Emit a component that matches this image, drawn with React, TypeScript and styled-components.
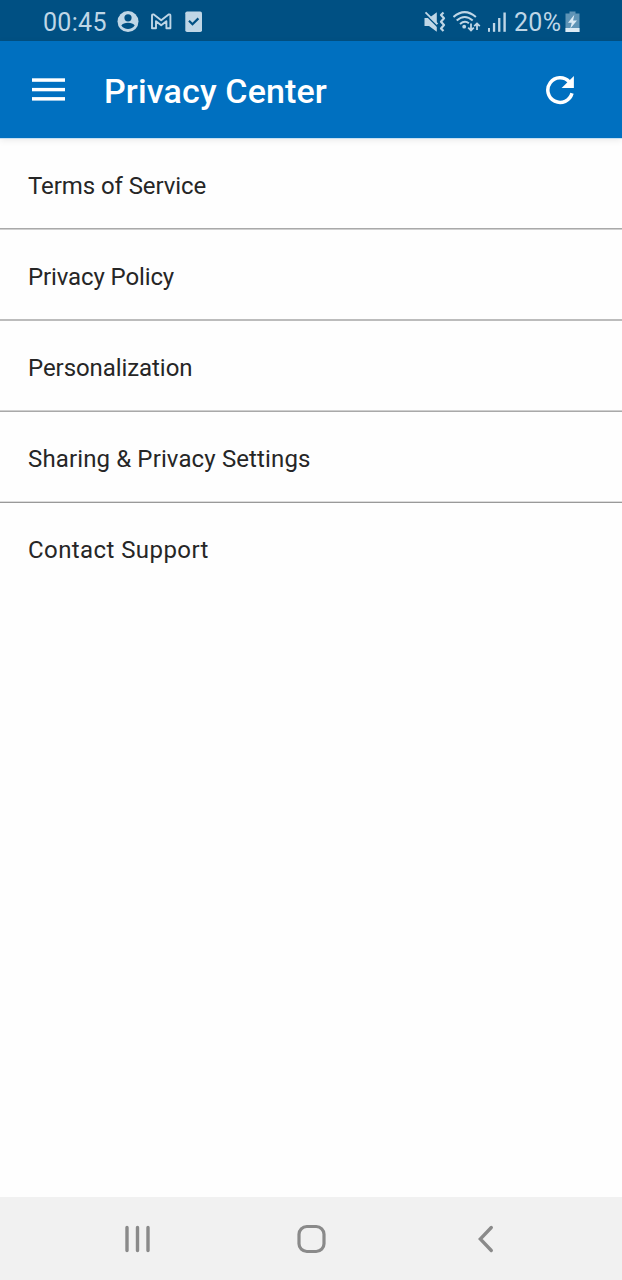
import React from "react";
import styled, { createGlobalStyle } from "styled-components";

const GlobalStyle = createGlobalStyle`
  * { box-sizing: border-box; }
  body { margin: 0; background: #fefefe; font-family: Roboto, "Liberation Sans", sans-serif; }
`;

const Screen = styled.div`
  display: flex;
  flex-direction: column;
  width: 622px;
  height: 1280px;
  background: #fefefe;
`;

const StatusBar = styled.div`
  display: flex;
  justify-content: space-between;
  height: 41px;
  padding: 0 42px 0 43px;
  background: #005083;
  color: #bfd6e6;
`;

const StatusGroup = styled.div`
  display: flex;
  align-items: center;
  height: 44px;
`;

const StatusText = styled.span<{ $width: number; $spacing?: number; $gap?: number }>`
  width: ${(p) => p.$width}px;
  margin-left: ${(p) => p.$gap ?? 0}px;
  padding-top: 2px;
  font-size: 25px;
  line-height: 42px;
  letter-spacing: ${(p) => p.$spacing ?? 0}px;
  white-space: nowrap;
`;

const StatusIcon = styled.svg<{ $gap?: number }>`
  display: block;
  flex: none;
  margin-left: ${(p) => p.$gap ?? 0}px;
`;

const AppBar = styled.header`
  display: flex;
  align-items: center;
  height: 97px;
  padding: 0 47px 0 32px;
  background: #0070c0;
  color: #fff;
  box-shadow: 0 1px 0 #c4dff2, 0 2px 7px rgba(0, 0, 0, 0.09);
`;

const IconButton = styled.button`
  display: flex;
  padding: 0;
  border: 0;
  background: none;
  color: inherit;
`;

const Title = styled.h1`
  flex: 1;
  margin: 2px 0 0 39px;
  font-size: 34px;
  font-weight: 500;
  line-height: 40px;
  letter-spacing: 0.14px;
  white-space: nowrap;
`;

const List = styled.ul`
  flex: 1;
  margin: 0;
  padding: 0;
  list-style: none;
`;

const Row = styled.li`
  display: flex;
  flex-direction: column;
  height: 91px;
  padding-top: 33px;
`;

const Label = styled.span<{ $spacing: number }>`
  height: 57px;
  padding: 0 28px;
  color: #262626;
  font-size: 24px;
  line-height: 30px;
  letter-spacing: ${(p) => p.$spacing}px;
  white-space: nowrap;
`;

const Rule = styled.div<{ $top: string; $bottom: string }>`
  flex: none;
  height: 2px;
  margin-bottom: -1px;
  border-top: 1px solid ${(p) => p.$top};
  border-bottom: 1px solid ${(p) => p.$bottom};
`;

const NavBar = styled.nav`
  display: grid;
  grid-template-columns: repeat(3, 174px);
  justify-content: center;
  justify-items: center;
  height: 83px;
  padding: 27px 0 0 1px;
  background: #f1f1f1;
  color: #8a8a8a;
`;

const NavIcon = styled.svg`
  display: block;
`;

const items = [
  { text: "Terms of Service", spacing: -0.08, rule: ["#a9a9a9", "#cfcfcf"] },
  { text: "Privacy Policy", spacing: -0.12, rule: ["#bcbcbc", "#bcbcbc"] },
  { text: "Personalization", spacing: -0.07, rule: ["#cfcfcf", "#a9a9a9"] },
  { text: "Sharing & Privacy Settings", spacing: 0.13, rule: ["#dcdcdc", "#999999"] },
  { text: "Contact Support", spacing: 0.42 },
];

export default function App() {
  return (
    <Screen>
      <GlobalStyle />
      <StatusBar>
        <StatusGroup>
          <StatusText $width={64} $spacing={0.3}>00:45</StatusText>
          <StatusIcon $gap={10} width="22" height="22" viewBox="0 0 22 22">
            <circle cx="11" cy="10.6" r="10.5" fill="currentColor" />
            <circle cx="11" cy="6.8" r="3.6" fill="#005083" />
            <path d="M4.3 14.5C5.5 12.5 8 11.7 11 11.7s5.5.8 6.7 2.8C16.2 16.8 13.8 18 11 18s-5.2-1.2-6.7-3.5z" fill="#005083" />
          </StatusIcon>
          <StatusIcon $gap={12} width="21" height="22" viewBox="0 0 21 22" fill="none" stroke="currentColor" strokeWidth="1.9" strokeLinejoin="round">
            <path d="M1 4.800Q1 3 2.800 3.400L10.200 9.300L17.600 3.400Q19.400 3 19.400 4.800V17.300H15.400V10.200L10.200 14.300L5 10.200V17.300H1z" />
          </StatusIcon>
          <StatusIcon $gap={13} width="18" height="22" viewBox="0 0 18 22">
            <rect x="0.3" y="0.5" width="16.700" height="20.500" rx="1.800" fill="currentColor" />
            <path d="M4 9.800L7.500 13.300L13.400 7.400" fill="none" stroke="#005083" strokeWidth="2.2" />
          </StatusIcon>
        </StatusGroup>
        <StatusGroup>
          <StatusIcon width="22" height="22" viewBox="0 0 22 22" fill="none" stroke="currentColor">
            <path d="M0.500 7H5L12.800 1.200V20.800L5 15H0.500z" fill="currentColor" stroke="none" />
            <path d="M0.600 2.800L13.500 15.500" stroke="#005083" strokeWidth="1.500" />
            <path d="M1.500 1.300L13.500 13.200" strokeWidth="1.900" />
            <path d="M19.500 1.500L17 4L20 7.300L17 10.700L20 14L17 17.500L19.500 20" strokeWidth="2.200" strokeLinejoin="round" />
          </StatusIcon>
          <StatusIcon $gap={7} width="28" height="22" viewBox="0 0 28 22" fill="none" stroke="currentColor" strokeWidth="2">
            <path d="M0.500 6Q11.700 -3.800 22.900 6" />
            <path d="M3.700 9.500Q11.700 2.500 19.700 9.500" />
            <path d="M7 12.900Q11.700 8.900 15.900 12.200" />
            <circle cx="11.200" cy="15.700" r="1.900" fill="currentColor" stroke="none" />
            <path d="M18 12.500V19M15.200 16.700L18 19.500L20.800 16.700M24 19V12.500M21.200 15.200L24 12.400L26.800 15.200" strokeWidth="1.800" />
          </StatusIcon>
          <StatusIcon $gap={7} width="19" height="22" viewBox="0 0 19 22" fill="currentColor">
            <rect x="0" y="17" width="2" height="3.800" />
            <rect x="4.900" y="12" width="2.300" height="8.800" />
            <rect x="10.100" y="7" width="2.300" height="13.800" />
            <rect x="15.400" y="1.500" width="2.400" height="19.300" />
          </StatusIcon>
          <StatusText $gap={7} $width={51} $spacing={0.3}>20%</StatusText>
          <StatusIcon width="15" height="22" viewBox="0 0 15 22">
            <path d="M4.500 0.500H10.500V2.500H14.500V21H0.500V2.500H4.500z" fill="#5f94b6" />
            <rect x="0.500" y="17" width="14" height="4" fill="#dcebf5" />
            <path d="M9.300 3.800L3 11.800H6.700L5.300 17.500L12 9.500H8.100z" fill="#dcebf5" />
          </StatusIcon>
        </StatusGroup>
      </StatusBar>
      <AppBar>
        <IconButton aria-label="Menu">
          <svg width="33" height="24" viewBox="0 0 33 24" fill="currentColor">
            <rect y="0.300" width="33" height="3.500" />
            <rect y="9.900" width="33" height="3.400" />
            <rect y="19.100" width="33" height="3.500" />
          </svg>
        </IconButton>
        <Title>Privacy Center</Title>
        <IconButton aria-label="Refresh">
          <svg width="30" height="30" viewBox="0 0 30 30">
            <path d="M27 18.300A12.300 12.300 0 1 1 24.200 6.800" fill="none" stroke="currentColor" strokeWidth="3.500" />
            <path d="M28.900 1V13H16.600z" fill="currentColor" />
          </svg>
        </IconButton>
      </AppBar>
      <List>
        {items.map((item) => (
          <Row key={item.text}>
            <Label $spacing={item.spacing}>{item.text}</Label>
            {item.rule && <Rule $top={item.rule[0]} $bottom={item.rule[1]} />}
          </Row>
        ))}
      </List>
      <NavBar>
        <NavIcon width="28" height="30" viewBox="0 0 28 30" stroke="currentColor" strokeWidth="3.400" strokeLinecap="round">
          <path d="M3 3.500V26.500M13.500 3.500V26.500M24 3.500V26.500" />
        </NavIcon>
        <NavIcon width="30" height="30" viewBox="0 0 30 30" fill="none" stroke="currentColor" strokeWidth="3.200">
          <rect x="2" y="2.500" width="25" height="25" rx="7.800" />
        </NavIcon>
        <NavIcon width="18" height="30" viewBox="0 0 18 30" fill="none" stroke="currentColor" strokeWidth="3.300" strokeLinecap="round" strokeLinejoin="miter">
          <path d="M14.300 3.500L3.300 15L14.300 26.500" />
        </NavIcon>
      </NavBar>
    </Screen>
  );
}
